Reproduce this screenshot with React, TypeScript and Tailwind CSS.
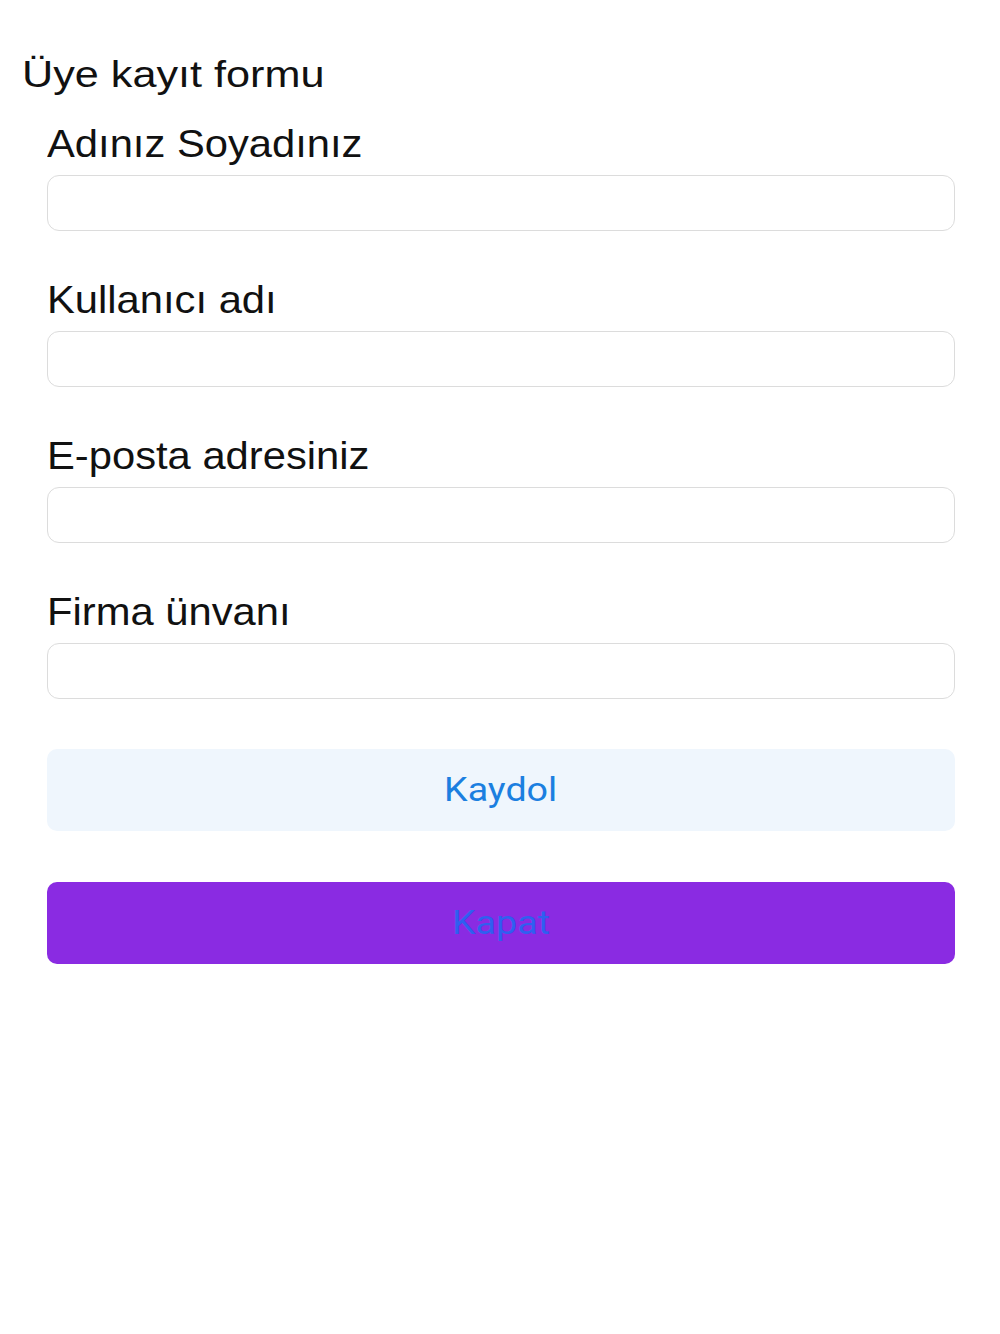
import { FC } from "react";

const fields = ["Adınız Soyadınız", "Kullanıcı adı", "E-posta adresiniz", "Firma ünvanı"];

const Field: FC<{ label: string }> = ({ label }) => {
  return (
    <div className="flex flex-col">
      <label className="h-[46px] flex items-end">
        <span className="inline-block origin-left scale-x-[1.07] text-[39px] leading-none text-[#111]">
          {label}
        </span>
      </label>
      <input
        type="text"
        className="mt-[12px] h-[56px] w-full rounded-[12px] border border-[#dcdcdc] bg-white outline-none"
      />
    </div>
  );
};

export default function App() {
  return (
    <div
      className="min-h-[1334px] w-[1000px] bg-white"
      style={{ fontFamily: '"Liberation Sans", Arial, sans-serif' }}
    >
      <div className="pt-[57px] pl-[22px]">
        <h1 className="inline-block origin-left scale-x-[1.2] text-[36px] leading-none font-normal text-[#111]">
          Üye kayıt formu
        </h1>
      </div>
      <div className="mt-[23px] flex flex-col gap-[42px] pl-[47px] pr-[45px]">
        {fields.map((f) => (
          <Field key={f} label={f} />
        ))}
      </div>
      <div className="mt-[50px] flex flex-col gap-[51px] pl-[47px] pr-[45px]">
        <button className="flex h-[82px] items-center justify-center rounded-[10px] bg-[#eff6fd] text-[#1b7fe0]">
          <span className="inline-block scale-x-[1.14] text-[33px]" style={{ fontFamily: "Roboto, sans-serif" }}>
            Kaydol
          </span>
        </button>
        <button className="flex h-[82px] items-center justify-center rounded-[10px] bg-[#8a2be2] text-[#2f5ff0]">
          <span className="inline-block scale-x-[1.14] text-[33px]" style={{ fontFamily: "Roboto, sans-serif" }}>
            Kapat
          </span>
        </button>
      </div>
    </div>
  );
}
